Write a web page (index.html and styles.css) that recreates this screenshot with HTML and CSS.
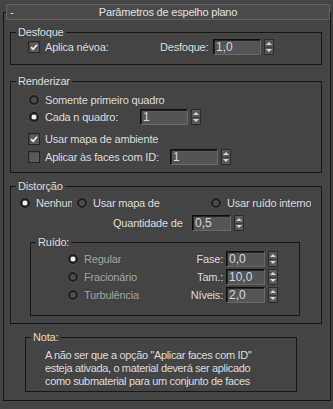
FILE: index.html
```html
<!DOCTYPE html>
<html lang="pt">
<head>
  <meta charset="UTF-8" />
  <title>Parâmetros de espelho plano</title>
  <link rel="stylesheet" href="styles.css">
</head>
<body>
  <div class="rollout">
    <div class="rollout-head">
      <span class="toggle">-</span>
      <span class="rollout-title">Parâmetros de espelho plano</span>
      <span></span>
    </div>

    <div class="rollout-body">
      <!-- Desfoque -->
      <fieldset class="group group-blur">
        <legend>Desfoque</legend>
        <div class="row">
          <span class="check checked"><svg viewBox="0 0 12 12"><path d="M2.5 6.2 L5 8.7 L9.6 3.2" /></svg></span>
          <span class="lbl fog-lbl">Aplica névoa:</span>
          <span class="lbl blur-lbl">Desfoque:</span>
          <span class="spin">
            <input class="spin-field" type="text" value="1,0">
            <span class="spin-arrows"><i class="up"></i><i class="dn"></i></span>
          </span>
        </div>
      </fieldset>

      <!-- Renderizar -->
      <fieldset class="group group-render">
        <legend>Renderizar</legend>
        <div class="row r1">
          <span class="radio"></span>
          <span class="lbl">Somente primeiro quadro</span>
        </div>
        <div class="row r2">
          <span class="radio on"></span>
          <span class="lbl nth-lbl">Cada n quadro:</span>
          <span class="spin">
            <input class="spin-field" type="text" value="1">
            <span class="spin-arrows"><i class="up"></i><i class="dn"></i></span>
          </span>
        </div>
        <div class="row r3">
          <span class="check checked"><svg viewBox="0 0 12 12"><path d="M2.5 6.2 L5 8.7 L9.6 3.2" /></svg></span>
          <span class="lbl">Usar mapa de ambiente</span>
        </div>
        <div class="row r4">
          <span class="check"></span>
          <span class="lbl id-lbl">Aplicar às faces com ID:</span>
          <span class="spin">
            <input class="spin-field" type="text" value="1">
            <span class="spin-arrows"><i class="up"></i><i class="dn"></i></span>
          </span>
        </div>
      </fieldset>

      <!-- Distorção -->
      <fieldset class="group group-distort">
        <legend>Distorção</legend>
        <div class="row d1">
          <span class="opt opt-none"><span class="radio on"></span><span class="lbl">Nenhum</span></span>
          <span class="opt opt-map"><span class="radio"></span><span class="lbl">Usar mapa de</span></span>
          <span class="opt"><span class="radio"></span><span class="lbl">Usar ruído interno</span></span>
        </div>
        <div class="row d2">
          <span class="lbl amount-lbl">Quantidade de</span>
          <span class="spin small">
            <input class="spin-field" type="text" value="0,5">
            <span class="spin-arrows"><i class="up"></i><i class="dn"></i></span>
          </span>
        </div>

        <fieldset class="group group-noise">
          <legend>Ruído:</legend>
          <div class="row n-row">
            <span class="opt dim"><span class="radio on"></span><span class="lbl">Regular</span></span>
            <span class="lbl side-lbl">Fase:</span>
            <span class="spin small">
              <input class="spin-field" type="text" value="0,0">
              <span class="spin-arrows"><i class="up"></i><i class="dn"></i></span>
            </span>
          </div>
          <div class="row n-row">
            <span class="opt dim"><span class="radio"></span><span class="lbl">Fracionário</span></span>
            <span class="lbl side-lbl">Tam.:</span>
            <span class="spin small">
              <input class="spin-field" type="text" value="10,0">
              <span class="spin-arrows"><i class="up"></i><i class="dn"></i></span>
            </span>
          </div>
          <div class="row n-row">
            <span class="opt dim"><span class="radio"></span><span class="lbl">Turbulência</span></span>
            <span class="lbl side-lbl">Níveis:</span>
            <span class="spin small">
              <input class="spin-field" type="text" value="2,0">
              <span class="spin-arrows"><i class="up"></i><i class="dn"></i></span>
            </span>
          </div>
        </fieldset>
      </fieldset>

      <!-- Nota -->
      <fieldset class="group group-note">
        <legend>Nota:</legend>
        <p class="note-text">
          A não ser que a opção "Aplicar faces com ID"<br>
          esteja ativada, o material deverá ser aplicado<br>
          como submaterial para um conjunto de faces<br>
          planas com o mesmo ID.
        </p>
      </fieldset>
    </div>
  </div>
</body>
</html>
```

FILE: styles.css
```css
body {
  margin: 0;
  background: #444444;
  font-family: "Liberation Sans", Arial, sans-serif;
  font-size: 11px;
  letter-spacing: -0.2px;
  color: #dcdcdc;
}
.rollout {
  margin: 4px 2px 0 3px;
}
.rollout-head {
  position: relative;
  z-index: 1;
  display: grid;
  grid-template-columns: 16px 1fr 16px;
  align-items: center;
  height: 16px;
  margin: 0 1px 0 3px;
  box-sizing: border-box;
  border: 1px solid #636363;
  background: #4a4a4a;
  color: #e2e2e2;
}
.rollout-head .toggle {
  padding-left: 3px;
  line-height: 12px;
}
.rollout-title {
  text-align: center;
  line-height: 14px;
}
.rollout-body {
  margin-top: -8px;
  border: 1px solid #141414;
  padding: 12px 0 8px;
}

/* group boxes */
fieldset.group {
  margin: 0 8px 0 6px;
  padding: 0 0 9px;
  border: 1px solid #171717;
  min-width: 0;
}
fieldset.group legend {
  margin-left: 5px;
  padding: 0 2px;
  height: 14px;
  line-height: 14px;
}
.group-render {
  margin-top: 9px !important;
  padding-bottom: 7px !important;
}
.group-distort {
  margin-top: 6px !important;
  padding-bottom: 7px !important;
}
.group-noise {
  margin: 4px 21px 0 19px !important;
  padding-bottom: 12px !important;
}
.group-note {
  margin: 6px 33px 0 21px !important;
  padding: 0 0 2px !important;
}
.group-note legend {
  color: #e4dcb8;
}

/* rows */
.row {
  display: flex;
  align-items: center;
  height: 16px;
  padding-left: 17px;
  white-space: nowrap;
}
.r1 { margin-top: 4px; }
.r2 { margin-top: 1px; }
.r3 { margin-top: 6px; }
.r4 { margin-top: 2px; }
.d1 { margin-top: 2px; padding-left: 9px; }
.d2 { margin-top: 4px; padding-left: 102px; }
.n-row {
  margin-top: 2px;
  padding-left: 36px;
  padding-right: 21px;
}

.lbl {
  line-height: 14px;
}
.fog-lbl { width: 115px; }
.blur-lbl { width: 53px; }
.nth-lbl { width: 95px; }
.id-lbl { width: 125px; }
.amount-lbl { width: 79px; }
.side-lbl {
  margin-left: auto;
  margin-right: 3px;
  text-align: right;
}

.opt {
  display: flex;
  align-items: center;
  overflow: hidden;
}
.opt-none { width: 52px; margin-right: 5px; }
.opt-map { width: 134px; }
.opt.dim .lbl { color: #a3a3a3; }

/* checkbox */
.check {
  display: inline-block;
  width: 12px;
  height: 12px;
  margin-right: 5px;
  box-sizing: border-box;
  border: 1px solid #262626;
  background: #5a5a5a;
  box-shadow: inset 1px 1px 0 #4a4a4a;
}
.check svg {
  display: block;
  width: 10px;
  height: 10px;
}
.check path {
  fill: none;
  stroke: #f2f2f2;
  stroke-width: 2;
}

/* radio */
.radio {
  display: inline-block;
  flex: none;
  width: 10px;
  height: 10px;
  margin: 0 6px 0 1px;
  box-sizing: border-box;
  border-radius: 50%;
  border: 2px solid #1e1e1e;
  background: #4c4c4c;
  box-shadow: 0 0 0 0.5px #5c5c5c;
}
.radio.on {
  background: radial-gradient(circle, #f4f4f4 0 2px, #6a6a6a 2.6px);
}
.d1 .radio { margin-left: 0; }

/* spinner */
.spin {
  display: flex;
  align-items: center;
  gap: 3px;
}
.spin-field {
  width: 48px;
  height: 16px;
  margin: 0;
  padding: 0 0 0 2px;
  box-sizing: border-box;
  border: 1px solid;
  border-color: #0e0e0e #6a6a6a #6a6a6a #0e0e0e;
  box-shadow: inset 1px 1px 0 #262626;
  background: #555555;
  color: #cdd9e8;
  font: inherit;
  font-size: 12px;
  outline: none;
}
.spin.small .spin-field {
  width: 39px;
}
.spin-arrows {
  display: flex;
  flex-direction: column;
  width: 10px;
  height: 16px;
  box-sizing: border-box;
  border: 1px solid #2c2c2c;
  background: #585858;
}
.spin-arrows i {
  flex: 1;
  display: flex;
  align-items: center;
  justify-content: center;
}
.spin-arrows i.up {
  border-bottom: 1px solid #3a3a3a;
}
.spin-arrows i::before {
  content: "";
  border-left: 3px solid transparent;
  border-right: 3px solid transparent;
}
.spin-arrows i.up::before {
  border-bottom: 3px solid #d6d6d6;
}
.spin-arrows i.dn::before {
  border-top: 3px solid #d6d6d6;
}

/* note */
.note-text {
  margin: 0;
  height: 40px;
  padding: 5px 0 0 19px;
  overflow: hidden;
  line-height: 13px;
  letter-spacing: -0.35px;
}
```
